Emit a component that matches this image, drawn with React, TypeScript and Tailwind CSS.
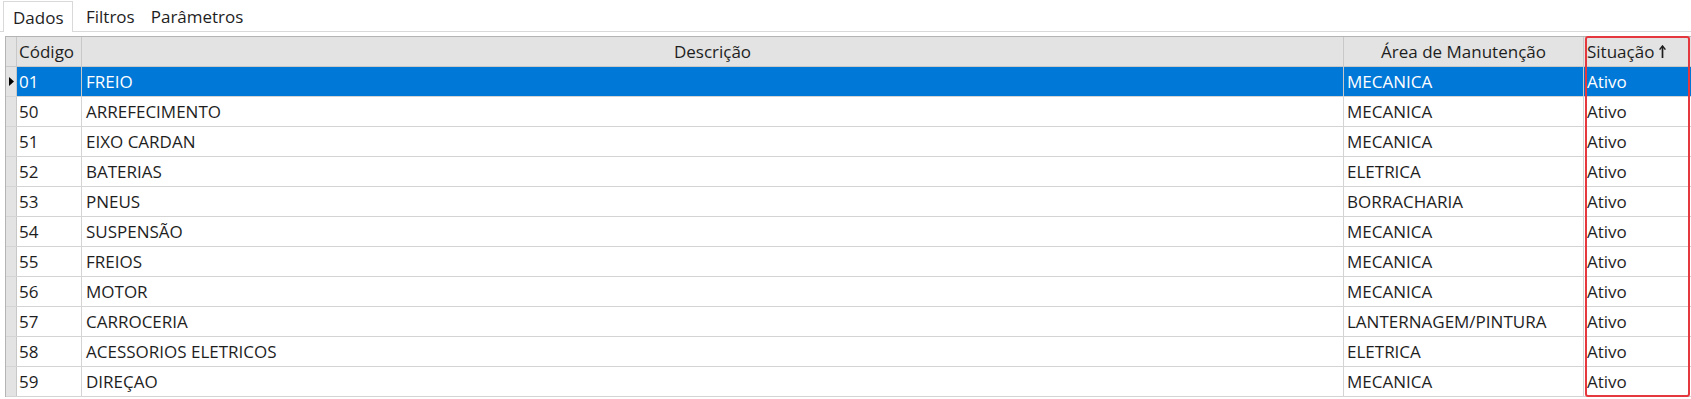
import React from "react";

const rows = [
  ["01", "FREIO", "MECANICA"],
  ["50", "ARREFECIMENTO", "MECANICA"],
  ["51", "EIXO CARDAN", "MECANICA"],
  ["52", "BATERIAS", "ELETRICA"],
  ["53", "PNEUS", "BORRACHARIA"],
  ["54", "SUSPENSÃO", "MECANICA"],
  ["55", "FREIOS", "MECANICA"],
  ["56", "MOTOR", "MECANICA"],
  ["57", "CARROCERIA", "LANTERNAGEM/PINTURA"],
  ["58", "ACESSORIOS ELETRICOS", "ELETRICA"],
  ["59", "DIREÇAO", "MECANICA"],
];

export default function App() {
  return (
    <div
      className="w-[1691px] h-[399px] overflow-hidden bg-white text-[#1e1e1e] text-[17px] leading-none"
      style={{ fontFamily: '"Open Sans", "Noto Sans", sans-serif' }}
    >
      {/* Tabs */}
      <div className="flex h-[32px] items-end border-b border-[#d9d9d9] pl-[3px]">
        <div className="w-[70px] h-[31px] -mb-px bg-white border border-b-0 border-[#d9d9d9] pl-[9px] flex items-center">
          Dados
        </div>
        <div className="h-[30px] pl-[13px] flex items-center">Filtros</div>
        <div className="h-[30px] pl-[16px] flex items-center">Parâmetros</div>
      </div>

      {/* Grid */}
      <div className="mt-[4px] ml-[5px] w-[1686px] border-l border-t border-[#b4b4b4] relative">
        <div className="flex h-[30px] bg-[#e3e3e3] border-b border-[#c8c8c8]">
          <div className="w-[11px] border-r border-[#c8c8c8]" />
          <div className="w-[65px] border-r border-[#c8c8c8] pl-[2px] flex items-center">Código</div>
          <div className="w-[1262px] border-r border-[#c8c8c8] flex items-center justify-center">Descrição</div>
          <div className="w-[240px] border-r border-[#c8c8c8] flex items-center justify-center">
            Área de Manutenção
          </div>
          <div className="flex-1 pl-[3px] flex items-center gap-[5px]">
            <span>Situação</span>
            <svg width="7" height="13" viewBox="0 0 7 13">
              <path d="M3.5 1.5 V13" stroke="#1e1e1e" strokeWidth="1.7" />
              <path d="M0.6 4.6 L3.5 1 L6.4 4.6" fill="none" stroke="#1e1e1e" strokeWidth="1.5" />
            </svg>
          </div>
        </div>
        {rows.map((r, i) => {
          const sel = i === 0;
          const line = sel ? "border-[#c8c8c8]" : "border-[#d4d4d4]";
          return (
            <div
              key={i}
              className={
                "flex h-[30px] border-b border-[#d4d4d4] " + (sel ? "bg-[#0078d7] text-white" : "bg-white")
              }
            >
              <div className="w-[11px] bg-[#e3e3e3] border-r border-[#c8c8c8] flex items-center justify-center">
                {sel ? (
                  <svg width="5" height="9" viewBox="0 0 5 9">
                    <path d="M0 0 L5 4.5 L0 9 Z" fill="#000" />
                  </svg>
                ) : null}
              </div>
              <div className={"w-[65px] pl-[2px] flex items-center border-r " + line}>{r[0]}</div>
              <div className={"w-[1262px] pl-[4px] flex items-center border-r " + line}>{r[1]}</div>
              <div className={"w-[240px] pl-[3px] flex items-center border-r " + line}>{r[2]}</div>
              <div className="flex-1 pl-[3px] flex items-center">Ativo</div>
            </div>
          );
        })}
        <div className="absolute left-[1579px] top-[-1px] w-[105px] h-[361px] border-2 border-[#e5383e] rounded-[3px] pointer-events-none" />
      </div>
    </div>
  );
}
